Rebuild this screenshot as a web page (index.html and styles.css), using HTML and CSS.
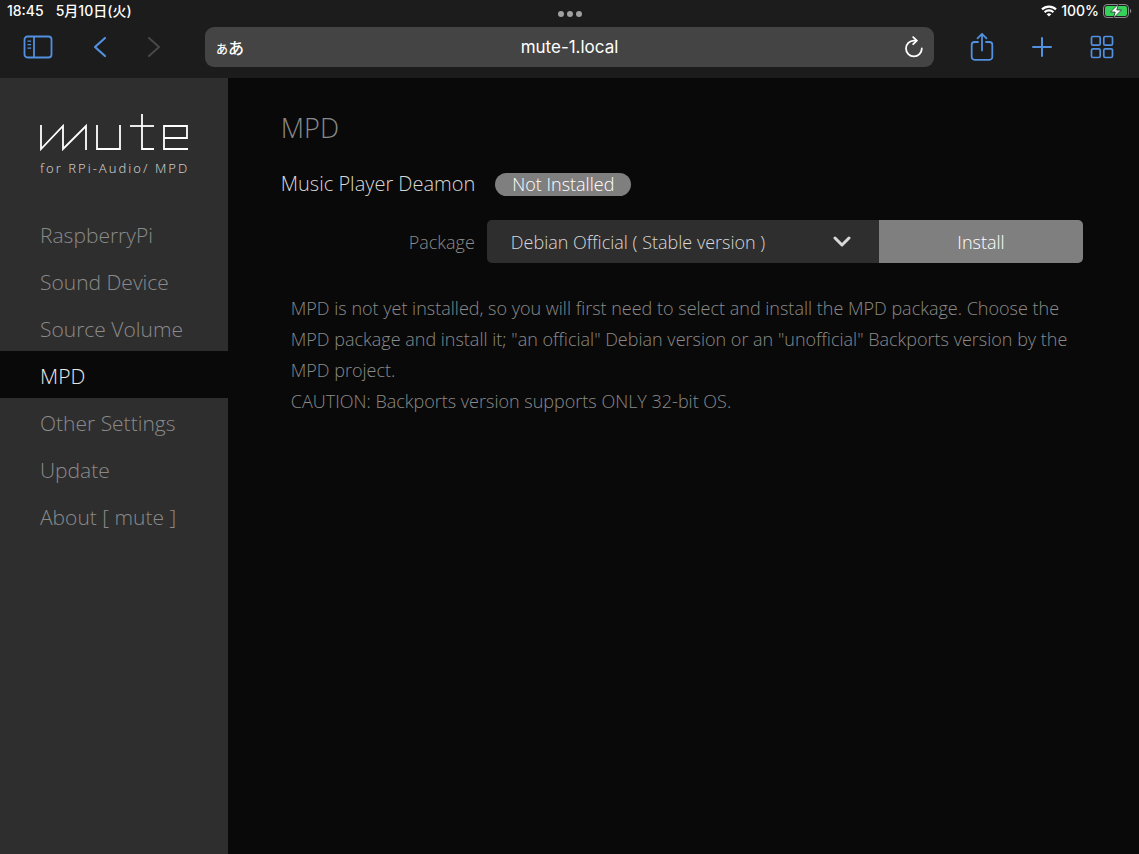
FILE: index.html
```html
<!DOCTYPE html>
<html lang="en">
<head>
    <meta charset="UTF-8">
    <meta name="viewport" content="width=device-width, initial-scale=1.0">
    <title>mute</title>
    <link rel="stylesheet" href="styles.css">
</head>
<body>
    <header class="browser">
        <div class="status">
            <div class="clock" lang="ja">
                <span>18:45</span>
                <span>5月10日(火)</span>
            </div>
            <div class="dots">
                <i></i><i></i><i></i>
            </div>
            <div class="power">
                <svg width="16" height="12" viewBox="0 0 16 12" fill="none" stroke="#fff" stroke-width="2.2">
                    <path d="M1 4.4a10 10 0 0 1 14 0M3.6 7.2a6.3 6.3 0 0 1 8.8 0"/>
                    <path d="M8 11.6L5.7 9.3a3.3 3.3 0 0 1 4.6 0z" fill="#fff" stroke="none"/>
                </svg>
                <span>100%</span>
                <svg width="29" height="14" viewBox="0 0 29 14">
                    <rect x="0.5" y="0.5" width="25" height="13" rx="3.5" fill="none" stroke="#8a8a8a"/>
                    <rect x="2" y="2" width="22" height="10" rx="2" fill="#35d158"/>
                    <path d="M27 4.8v4.4c1.8-.8 1.8-3.6 0-4.4z" fill="#8a8a8a"/>
                    <path d="M15.5 0L7.5 8h4.7l-1.7 6L18.5 6h-4.7z" fill="#fff" stroke="#1c1c1c" stroke-width="0.7"/>
                </svg>
            </div>
        </div>

        <div class="toolbar">
            <div class="tools tools_left">
                <button type="button" aria-label="Sidebar">
                    <svg width="30" height="24" viewBox="0 0 30 24" fill="none" stroke="#5290e0" stroke-width="1.8">
                        <rect x="1.5" y="1.5" width="27" height="21" rx="3"/>
                        <path d="M11 1.5v21"/>
                        <path d="M4.5 6.2h3.6M4.5 9.7h3.6M4.5 13.2h3.6" stroke-width="1.3"/>
                    </svg>
                </button>
                <button type="button" aria-label="Back">
                    <svg width="14" height="22" viewBox="0 0 14 22" fill="none" stroke="#5290e0" stroke-width="2.2" stroke-linecap="round" stroke-linejoin="round">
                        <path d="M12 2L2 11l10 9"/>
                    </svg>
                </button>
                <button type="button" aria-label="Forward" disabled>
                    <svg width="14" height="22" viewBox="0 0 14 22" fill="none" stroke="#484848" stroke-width="2" stroke-linecap="round" stroke-linejoin="round">
                        <path d="M2 2l10 9-10 9"/>
                    </svg>
                </button>
            </div>
            <div class="address">
                <button type="button" class="reader" lang="ja"><span>あ</span>あ</button>
                <input type="text" class="url" aria-label="Address" value="mute-1.local">
                <button type="button" class="reload" aria-label="Reload">
                    <svg width="20" height="22" viewBox="0 0 20 22" fill="none" stroke="#fff" stroke-width="1.8" stroke-linecap="round" stroke-linejoin="round">
                        <path d="M17.8 12.5A7.9 7.9 0 1 1 9.9 4.6h2.6"/>
                        <path d="M9.2 1.2l3.6 3.4-3.6 3.6"/>
                    </svg>
                </button>
            </div>
            <div class="tools tools_right">
                <button type="button" aria-label="Share">
                    <svg width="24" height="30" viewBox="0 0 24 30" fill="none" stroke="#5290e0" stroke-width="1.8" stroke-linecap="round" stroke-linejoin="round">
                        <path d="M8 10H4.5A2.8 2.8 0 0 0 1.7 12.8V25a2.8 2.8 0 0 0 2.8 2.8h15a2.8 2.8 0 0 0 2.8-2.8V12.8A2.8 2.8 0 0 0 19.5 10H16"/>
                        <path d="M12 18.5V2M7.5 6.3L12 1.8l4.5 4.5"/>
                    </svg>
                </button>
                <button type="button" aria-label="New tab">
                    <svg width="20" height="20" viewBox="0 0 20 20" fill="none" stroke="#5290e0" stroke-width="2" stroke-linecap="round">
                        <path d="M10 1v18M1 10h18"/>
                    </svg>
                </button>
                <button type="button" aria-label="Tabs">
                    <svg width="24" height="24" viewBox="0 0 24 24" fill="none" stroke="#5290e0" stroke-width="1.7">
                        <rect x="1.5" y="1.5" width="8.7" height="8.7" rx="1.5"/>
                        <rect x="13.8" y="1.5" width="8.7" height="8.7" rx="1.5"/>
                        <rect x="1.5" y="13.8" width="8.7" height="8.7" rx="1.5"/>
                        <rect x="13.8" y="13.8" width="8.7" height="8.7" rx="1.5"/>
                    </svg>
                </button>
            </div>
        </div>
    </header>

    <div class="wrap">
        <aside class="side">
            <div class="logo">
                <svg width="148" height="38" viewBox="0 0 148 38" role="img" aria-label="mute" fill="none" stroke="#fff" stroke-width="1.8">
                    <polyline points="1,11 1,35 23,12 23,35 46,12 46,36"/>
                    <polyline points="57,11 57,35 80,35 80,11"/>
                    <polyline points="102,0 102,35 114,35"/>
                    <line x1="90" y1="12" x2="114" y2="12"/>
                    <polyline points="148,35 124,35 124,12 147,12 147,24 124,24"/>
                </svg>
                <p>for RPi-Audio/ MPD</p>
            </div>
            <nav>
                <ul class="menu">
                    <li><a href="#">RaspberryPi</a></li>
                    <li><a href="#">Sound Device</a></li>
                    <li><a href="#">Source Volume</a></li>
                    <li><a href="#" class="active">MPD</a></li>
                    <li><a href="#">Other Settings</a></li>
                    <li><a href="#">Update</a></li>
                    <li><a href="#">About [ mute ]</a></li>
                </ul>
            </nav>
        </aside>

        <main class="content">
            <h1>MPD</h1>
            <h2>Music Player Deamon <span class="badge">Not Installed</span></h2>
            <form class="package">
                <label for="package">Package</label>
                <div class="select">
                    <select id="package">
                        <option>Debian Official ( Stable version )</option>
                        <option>Backports ( Unofficial version )</option>
                    </select>
                    <svg width="18" height="12" viewBox="0 0 18 12" fill="none" stroke="#d8d8d8" stroke-width="3" stroke-linecap="round" stroke-linejoin="round">
                        <path d="M2 2l7 7 7-7"/>
                    </svg>
                </div>
                <button type="button">Install</button>
            </form>
            <p class="note">MPD is not yet installed, so you will first need to select and install the MPD package. Choose the MPD package and install it; "an official" Debian version or an "unofficial" Backports version by the MPD project.<br>CAUTION: Backports version supports ONLY 32-bit OS.</p>
        </main>
    </div>
</body>
</html>
```

FILE: styles.css
```css
* {
    padding: 0;
    margin: 0;
    box-sizing: border-box;
}
body {
    min-height: 100vh;
    display: flex;
    flex-direction: column;
    background: #090909;
    font-family: "Open Sans", "Noto Sans", sans-serif;
    font-weight: 300;
}
button {
    border: 0;
    background: none;
    font: inherit;
    color: inherit;
    cursor: pointer;
}
svg {
    display: block;
}

/* browser bar */
.browser {
    height: 78px;
    background: #1c1c1c;
    color: #fff;
    font-family: Inter, "Noto Sans CJK JP", sans-serif;
    font-weight: 400;
}
.status {
    height: 22px;
    padding: 0 7px;
    display: grid;
    grid-template-columns: 1fr auto 1fr;
    align-items: center;
    font-size: 14px;
    line-height: 22px;
    font-weight: 500;
}
.clock {
    display: flex;
    gap: 12px;
}
.dots {
    display: flex;
    gap: 3px;
    padding-top: 6px;
}
.dots i {
    width: 6px;
    height: 6px;
    border-radius: 50%;
    background: #a0a0a0;
}
.power {
    display: flex;
    justify-content: flex-end;
    align-items: center;
    gap: 4px;
}
.toolbar {
    display: grid;
    grid-template-columns: 1fr 64% 1fr;
    align-items: center;
    padding-top: 5px;
}
.tools {
    display: flex;
    align-items: center;
}
.tools_left {
    gap: 40px;
    padding-left: 23px;
}
.tools_right {
    gap: 38px;
    padding-right: 25px;
    justify-content: flex-end;
}
.address {
    height: 40px;
    padding: 0 10px;
    display: flex;
    align-items: center;
    border-radius: 9px;
    background: #444;
}
.reader {
    width: 30px;
    font-size: 16px;
    font-weight: 500;
    white-space: nowrap;
}
.reader span {
    font-size: 12px;
}
.reload {
    width: 30px;
    display: flex;
    justify-content: flex-end;
}
.url {
    flex: 1;
    min-width: 0;
    border: 0;
    outline: 0;
    background: none;
    color: #fff;
    font: 17px Inter, sans-serif;
    text-align: center;
}

.wrap {
    flex: 1;
    display: flex;
}

/* side menu */
.side {
    width: 20%;
    background: #2e2e2e;
}
.logo {
    padding: 36px 0 0 40px;
}
.logo p {
    margin-top: 8px;
    font-family: "Noto Sans", sans-serif;
    font-size: 13px;
    line-height: 16px;
    letter-spacing: 2px;
    color: #ccc;
    white-space: nowrap;
}
.menu {
    margin-top: 34px;
    list-style: none;
}
.menu a {
    display: block;
    padding: 4px 0 0 40px;
    font-size: 21px;
    line-height: 43px;
    color: #8a8a8a;
    text-decoration: none;
    white-space: nowrap;
}
.menu .active {
    background: #090909;
    color: #e8e8e8;
}

/* main */
.content {
    flex: 1;
    min-width: 0;
    padding: 32px 56px 32px 53px;
}
.content h1 {
    font-size: 27px;
    line-height: 36px;
    font-weight: 300;
    color: #8a8a8a;
}
.content h2 {
    margin-top: 22px;
    display: flex;
    align-items: center;
    gap: 20px;
    font-size: 20px;
    line-height: 32px;
    font-weight: 300;
    color: #d8d8d8;
}
.badge {
    padding: 0 17px;
    border-radius: 12px;
    background: #7f7f7f;
    font-size: 18px;
    line-height: 23px;
    color: #fff;
}
.package {
    margin-top: 20px;
    display: grid;
    grid-template-columns: 103fr 196fr 102fr;
    align-items: center;
    font-size: 18px;
}
.package label {
    padding-right: 12px;
    text-align: right;
    color: #8a8a8a;
}
.select {
    position: relative;
}
.select select {
    width: 100%;
    height: 43px;
    padding: 0 60px 0 24px;
    border: 0;
    border-radius: 5px 0 0 5px;
    appearance: none;
    background: #2e2e2e;
    color: #d8d8d8;
    font: inherit;
}
.select svg {
    position: absolute;
    top: 16px;
    right: 28px;
    pointer-events: none;
}
.package button {
    height: 43px;
    border-radius: 0 5px 5px 0;
    background: #7f7f7f;
    color: #fff;
}
.note {
    margin-top: 30px;
    padding-left: 10px;
    font-size: 18px;
    line-height: 31px;
    color: #8a8a8a;
}
```
